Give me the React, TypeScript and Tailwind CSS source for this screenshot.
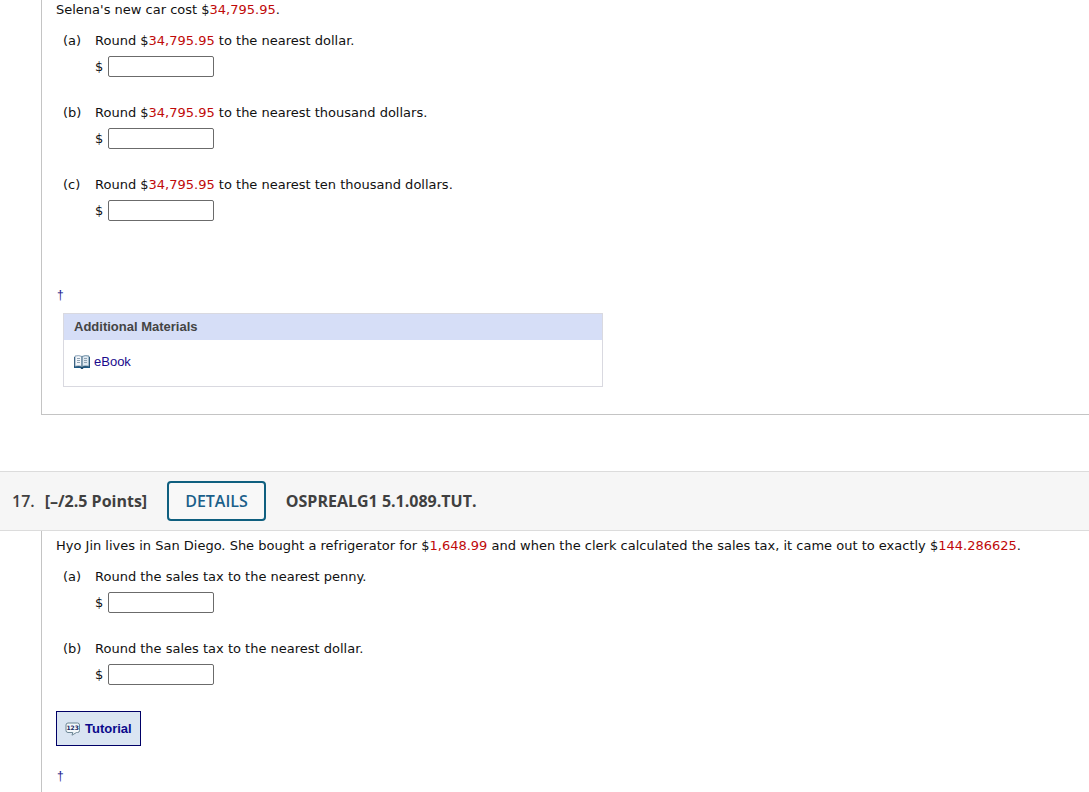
import type { ReactNode } from "react";

function Num({ children }: { children: ReactNode }) {
  return <span className="text-[#c00a0a]">{children}</span>;
}

function Part({ id, letter, children }: { id: string; letter: string; children: ReactNode }) {
  return (
    <li className="flex">
      <span className="w-8 shrink-0">({letter})</span>
      <div>
        <label htmlFor={id} className="block">{children}</label>
        <div className="mt-[7px] flex items-center gap-[5px]">
          <span>$</span>
          <input
            id={id}
            type="text"
            className="h-[21px] w-[106px] rounded-xs border border-[#6b6b6b] bg-white px-1 text-[13px]"
          />
        </div>
      </div>
    </li>
  );
}

function Dagger() {
  return (
    <a href="#copyright" className="block w-fit px-px font-['Liberation_Sans',Arial,sans-serif] text-xs leading-4 text-[#1a1a8c]">
      †
    </a>
  );
}

function BookIcon() {
  return (
    <svg width="16" height="14" viewBox="0 0 16 14" aria-hidden="true">
      <path d="M0 2h1v9h6l1 1 1-1h6V2h1v11H9.500l-.7 1H7.200l-.7-1H0z" fill="#1d4b6e" />
      <path d="M1 1Q5 0 8 1.500v10Q5 10.300 1 11.300z" fill="#f3f6fa" stroke="#6d8ca5" strokeWidth=".8" />
      <path d="M15 1Q11 0 8 1.500v10q3-1.200 7-.2z" fill="#dfe9f1" stroke="#4c7591" strokeWidth=".8" />
      <path d="M3 3.500h3M3 5.500h3M3 7.500h3M10 3.500h3M10 5.500h3M10 7.500h3" fill="none" stroke="#8fa3b3" />
      <path d="M8 1.500v10.500" stroke="#6b8aa0" />
      <path d="M0 12.500h6.500M9.500 12.500H16" stroke="#1d5a86" />
    </svg>
  );
}

function TutorialIcon() {
  return (
    <svg width="16" height="14" viewBox="0 0 16 14" aria-hidden="true">
      <path
        d="M3 1h9.500Q14.500 1 14.500 3v5.500q0 2-2 2H11.500L7 13.200l.8-2.700H3q-2 0-2-2V3q0-2 2-2z"
        fill="#f3f8fb"
        stroke="#6d8796"
      />
      <text x="7.700" y="8" textAnchor="middle" fontSize="6" fontWeight="700" fontFamily="DejaVu Sans, sans-serif" fill="#16265e">
        123
      </text>
    </svg>
  );
}

export default function App() {
  return (
    <main className="min-h-screen overflow-hidden bg-white font-['DejaVu_Sans',Verdana,sans-serif] text-[13px] leading-4 text-[#111]">
      <section className="ml-[41px] border-b border-l border-[#c4c4c4] pt-0.5 pb-[27px] pl-[14px]">
        <p>
          Selena's new car cost $<Num>34,795.95</Num>.
        </p>
        <ol className="mt-[15px] ml-[7px] flex flex-col gap-7">
          <Part id="q16-a" letter="a">
            Round $<Num>34,795.95</Num> to the nearest dollar.
          </Part>
          <Part id="q16-b" letter="b">
            Round $<Num>34,795.95</Num> to the nearest thousand dollars.
          </Part>
          <Part id="q16-c" letter="c">
            Round $<Num>34,795.95</Num> to the nearest ten thousand dollars.
          </Part>
        </ol>
        <div className="mt-[66px]">
          <Dagger />
        </div>
        <div className="mt-[10px] ml-[7px] max-w-[540px] border border-[#d9d9e0] font-['Liberation_Sans',Arial,sans-serif]">
          <h3 className="bg-[#d6def7] px-[10px] py-[5px] font-bold text-[#444]">Additional Materials</h3>
          <div className="px-[10px] pt-[14px] pb-4">
            <a href="#ebook" className="flex w-fit items-center gap-1 leading-4 text-[#1a0a8c]">
              <BookIcon />
              eBook
            </a>
          </div>
        </div>
      </section>

      <header className="mt-14 flex items-center border-y border-[#dcdcdc] bg-[#f6f6f6] py-[9px] pl-3 font-['Open_Sans',sans-serif] text-base leading-6 font-bold text-[#404040]">
        <span className="mr-[10px] font-semibold">17.</span>
        <span className="mr-5">[–/2.5 Points]</span>
        <button
          type="button"
          className="mr-5 h-10 rounded-sm border-2 border-[#0f5f7f] bg-[#f8f8f8] px-4 font-semibold text-[#1b5f8a]"
        >
          DETAILS
        </button>
        <h2>OSPREALG1 5.1.089.TUT.</h2>
      </header>

      <section className="ml-[41px] border-l border-[#c4c4c4] pt-[7px] pb-8 pl-[14px]">
        <p>
          Hyo Jin lives in San Diego. She bought a refrigerator for $<Num>1,648.99</Num> and when the clerk calculated
          the sales tax, it came out to exactly $<Num>144.286625</Num>.
        </p>
        <ol className="mt-[15px] ml-[7px] flex flex-col gap-7">
          <Part id="q17-a" letter="a">Round the sales tax to the nearest penny.</Part>
          <Part id="q17-b" letter="b">Round the sales tax to the nearest dollar.</Part>
        </ol>
        <button
          type="button"
          className="mt-[26px] flex h-[35px] items-center gap-1 border border-[#000066] bg-[#dae5f2] px-2 font-['Liberation_Sans',Arial,sans-serif] font-bold text-[#0a0a8c]"
        >
          <TutorialIcon />
          Tutorial
        </button>
        <div className="mt-[22px]">
          <Dagger />
        </div>
      </section>
    </main>
  );
}
